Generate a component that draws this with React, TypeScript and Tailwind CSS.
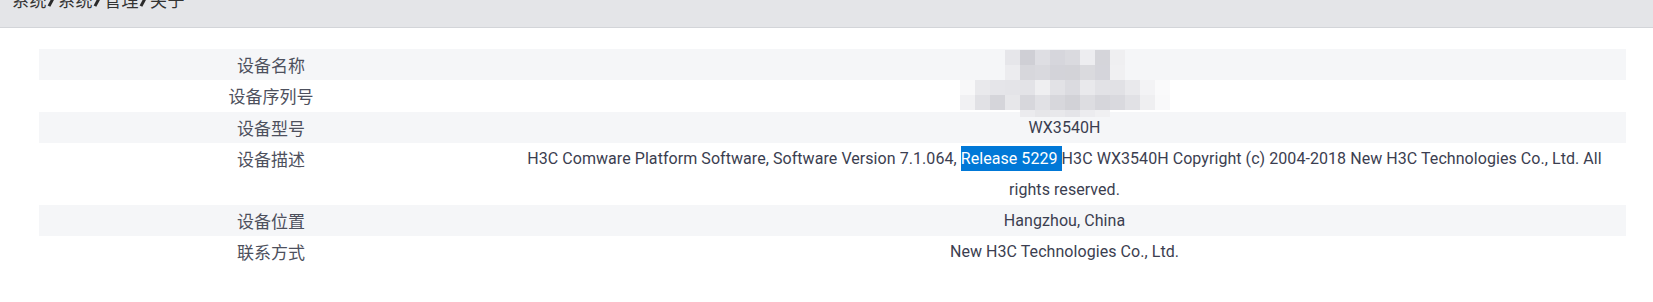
import React from "react";

type Row = { label: string; value: React.ReactNode; tall?: boolean };

// pixelated blur that hides device name / serial number
const mosaic: { top: number; left: number; h: number; cells: string[] }[] = [
  { top: 1, left: 966, h: 15, cells: ["#e6e6ea", "#cfcfd5", "#dedee3", "#d6d6dc", "#dadadf", "#ededf0", "#d5d5da", "#efeff1"] },
  { top: 16, left: 966, h: 15, cells: ["#ececef", "#d7d7dc", "#d9d9de", "#d3d3d9", "#d3d3d8", "#dadade", "#d5d5db", "#f0f0f2"] },
  { top: 31, left: 921, h: 15, cells: ["#f8f8f9", "#e9e9ec", "#e5e5e9", "#e4e4e8", "#e3e3e7", "#efeff1", "#e2e2e6", "#dbdbe0", "#e9e9ec", "#e2e2e6", "#e1e1e5", "#e9e9ec", "#f3f3f5", "#fafafb"] },
  { top: 46, left: 921, h: 15, cells: ["#f1f1f3", "#e1e1e5", "#d5d5da", "#e7e7ea", "#d7d7dc", "#e1e1e5", "#d7d7dc", "#d2d2d7", "#dddde1", "#d6d6db", "#d9d9de", "#e1e1e5", "#efeff1", "#f9f9fa"] },
  { top: 61, left: 981, h: 7, cells: ["#ebebee", "#e6e6e9", "#e8e8eb", "#e4e4e8", "#ececef", "#f0f0f2"] },
];

const rows: Row[] = [
  { label: "设备名称", value: "" },
  { label: "设备序列号", value: "" },
  { label: "设备型号", value: "WX3540H" },
  {
    label: "设备描述",
    tall: true,
    value: (
      <>
        H3C Comware Platform Software, Software Version 7.1.064,{" "}
        <span className="bg-[#0078d7] text-white py-[3px]">Release 5229 </span>H3C WX3540H Copyright (c) 2004-2018 New H3C
        Technologies Co., Ltd. All rights reserved.
      </>
    ),
  },
  { label: "设备位置", value: "Hangzhou, China" },
  { label: "联系方式", value: "New H3C Technologies Co., Ltd." },
];

const Sep = () => (
  <span className="inline-block w-[11px] h-[16px] align-top relative">
    <span className="absolute left-[4px] top-[1px] w-[3px] h-[15px] bg-[#2a2a2a] rotate-[28deg]" />
  </span>
);

export default function App() {
  return (
    <div className="w-[1653px] h-[302px] bg-white overflow-hidden">
      {/* breadcrumb bar, scrolled partly out of view */}
      <div className="h-[28px] bg-[#e4e5e8] border-b border-[#d3d5d9] overflow-hidden">
        <div
          className="-mt-[9px] pl-[12px] text-[17px] leading-[17px] tracking-[0.5px] text-[#333]"
          style={{ fontFamily: '"Noto Sans CJK SC", sans-serif' }}
        >
          系统<Sep />系统<Sep />管理<Sep />关于
        </div>
      </div>

      <div className="relative mt-[21px] ml-[39px] w-[1587px]">
        {rows.map((r, i) => (
          <div
            key={r.label}
            className={`grid grid-cols-[464px_1fr] ${i % 2 === 0 ? "bg-[#f5f6f8]" : "bg-white"}`}
          >
            <div
              className="text-center text-[17px] leading-[31.3px] text-[#4d505d]"
              style={{ fontFamily: '"Noto Sans CJK SC", sans-serif' }}
            >
              {r.label}
            </div>
            <div
              className={`text-center text-[16px] tracking-[0.06px] px-[8px] text-[#3b3e50] ${r.tall ? "leading-[31px]" : "leading-[31.3px]"}`}
              style={{ fontFamily: 'Roboto, "Noto Sans CJK SC", sans-serif' }}
            >
              {r.value === "" ? "\u00a0" : r.value}
            </div>
          </div>
        ))}

        {mosaic.map((m, i) => (
          <div key={i} className="absolute flex" style={{ top: m.top, left: m.left, height: m.h }}>
            {m.cells.map((c, j) => (
              <div key={j} className="w-[15px] h-full" style={{ background: c }} />
            ))}
          </div>
        ))}
      </div>
    </div>
  );
}
